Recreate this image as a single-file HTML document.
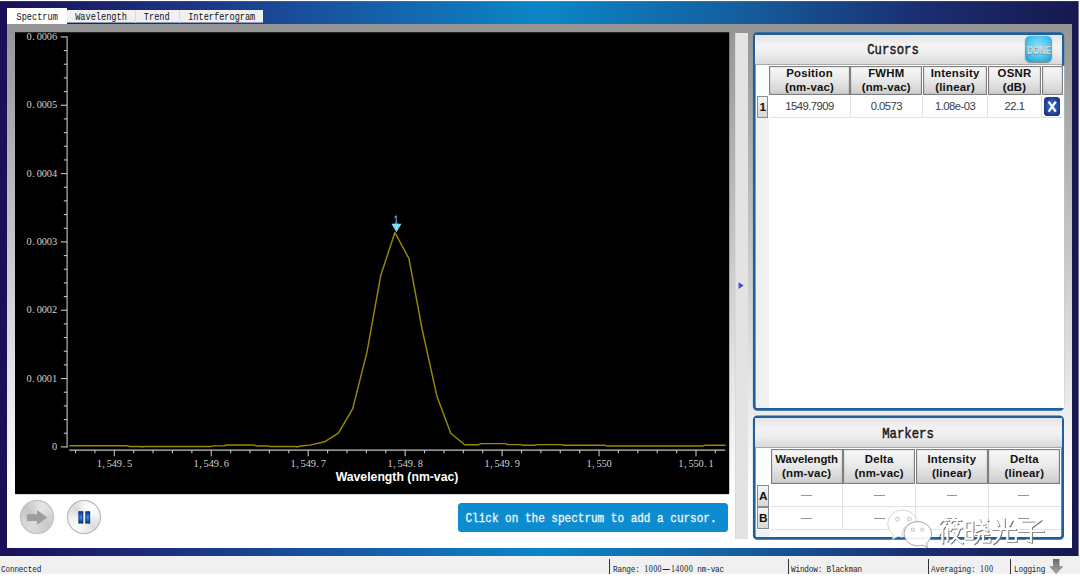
<!DOCTYPE html>
<html><head><meta charset="utf-8"><title>Spectrum</title>
<style>
html,body{margin:0;padding:0;background:#fff;}
body{width:1080px;height:579px;position:relative;overflow:hidden;font-family:"Liberation Sans",sans-serif;}
.abs{position:absolute;}
div{position:absolute;box-sizing:border-box;}
.mono{font-family:"Liberation Mono",monospace;}
.tab{font-family:"Liberation Mono",monospace;font-size:11px;letter-spacing:0;transform:scaleX(0.782);transform-origin:50% 50%;color:#111;text-align:center;white-space:nowrap;}
.c{display:inline-block;text-align:center;letter-spacing:0;line-height:0;vertical-align:baseline;}
.d{font-family:"Liberation Serif",serif;}
.tk{font-family:"Liberation Mono",monospace;font-size:10px;letter-spacing:0;color:#cfcfcf;white-space:nowrap;line-height:12px;height:12px;}
.sb{font-family:"Liberation Mono",monospace;font-size:9.6px;letter-spacing:0;transform:scaleX(0.8);transform-origin:0 50%;color:#222;white-space:nowrap;line-height:12px;top:564.4px;}
.sep{width:1.3px;background:#333;top:558.5px;height:15.5px;}
.hc{border:1px solid #7f7f7f;box-shadow:inset 0 0 1.3px rgba(0,0,0,0.38);background:linear-gradient(#f7f7f7,#eaeaea 45%,#cecece);letter-spacing:0.22px;font-weight:bold;font-size:11.4px;line-height:13.6px;color:#111;text-align:center;padding-top:0px;white-space:nowrap;}
.rh{border:1px solid #8a8a8a;background:linear-gradient(#f6f6f6,#d8d8d8);font-weight:bold;font-size:11.8px;color:#111;text-align:center;}
.cell{font-size:11.3px;letter-spacing:-0.56px;color:#3c3c3c;text-align:center;white-space:nowrap;}
.gl{background:#e2e2e2;}
.dash{height:1.4px;width:10.8px;background:#969696;}
.ptitle{font-family:"Liberation Mono",monospace;font-weight:normal;-webkit-text-stroke:0.5px #1a1a1a;font-size:14.4px;letter-spacing:0;transform:scaleX(0.855);transform-origin:50% 50%;color:#1a1a1a;text-align:center;white-space:nowrap;}
</style></head><body>
<!-- outer frame -->
<svg class="abs" style="left:0;top:0" width="1080" height="579" viewBox="0 0 1080 579"><defs><linearGradient id="fr" x1="0" y1="0" x2="1" y2="0"><stop offset="0%" stop-color="#1a0f58"/><stop offset="15%" stop-color="#1c2f7c"/><stop offset="32%" stop-color="#1858a4"/><stop offset="50%" stop-color="#0b86c8"/><stop offset="68%" stop-color="#14609f"/><stop offset="85%" stop-color="#1a2f72"/><stop offset="100%" stop-color="#17184f"/></linearGradient></defs><rect x="0" y="1.1" width="1078.6" height="554.9" fill="url(#fr)"/></svg>
<!-- interior -->
<div style="left:7px;top:24px;width:1065px;height:524px;background:linear-gradient(to bottom,#949494 0px,#ffffff 471px,#ffffff 524px);"></div>
<!-- tabs -->
<div style="left:67.4px;top:9.6px;width:195.6px;height:13.6px;background:#f0f0f0;border-bottom:1px solid #8a9cc4;"></div>
<div style="left:135px;top:9.6px;width:1px;height:13.4px;background:#d9d9d9;"></div>
<div style="left:178.5px;top:9.6px;width:1px;height:13.4px;background:#d9d9d9;"></div>
<div style="left:7px;top:8px;width:60.4px;height:16px;background:#fff;"></div>
<div class="tab" style="left:7px;width:60.4px;top:11.1px;line-height:12px;">Spectrum</div>
<div class="tab" style="left:67.4px;width:68px;top:11.2px;line-height:12px;">Wavelength</div>
<div class="tab" style="left:135.3px;width:43.5px;top:11.2px;line-height:12px;">Trend</div>
<div class="tab" style="left:178.8px;width:84.2px;top:11.2px;line-height:12px;">Interferogram</div>
<!-- plot -->
<svg class="abs" style="left:0;top:0" width="1080" height="579" viewBox="0 0 1080 579"><rect x="15" y="32.25" width="714.2" height="461.9" fill="#000"/></svg>
<svg class="abs" style="left:0;top:0" width="1080" height="579" viewBox="0 0 1080 579"><g stroke="#c4c4c4" stroke-width="1.1" fill="none" shape-rendering="auto"><path d="M67.1 36.4V447.4"/><path d="M60.8 446.90H67.1"/><path d="M63.8 433.23H67.1"/><path d="M63.8 419.57H67.1"/><path d="M63.8 405.90H67.1"/><path d="M63.8 392.24H67.1"/><path d="M60.8 378.57H67.1"/><path d="M63.8 364.90H67.1"/><path d="M63.8 351.24H67.1"/><path d="M63.8 337.57H67.1"/><path d="M63.8 323.91H67.1"/><path d="M60.8 310.24H67.1"/><path d="M63.8 296.57H67.1"/><path d="M63.8 282.91H67.1"/><path d="M63.8 269.24H67.1"/><path d="M63.8 255.58H67.1"/><path d="M60.8 241.91H67.1"/><path d="M63.8 228.24H67.1"/><path d="M63.8 214.58H67.1"/><path d="M63.8 200.91H67.1"/><path d="M63.8 187.25H67.1"/><path d="M60.8 173.58H67.1"/><path d="M63.8 159.91H67.1"/><path d="M63.8 146.25H67.1"/><path d="M63.8 132.58H67.1"/><path d="M63.8 118.92H67.1"/><path d="M60.8 105.25H67.1"/><path d="M63.8 91.58H67.1"/><path d="M63.8 77.92H67.1"/><path d="M63.8 64.25H67.1"/><path d="M63.8 50.59H67.1"/><path d="M60.8 36.92H67.1"/><path d="M69.3 450.1H725.2"/><path d="M75.52 449.9V453.2"/><path d="M94.91 449.9V453.2"/><path d="M114.30 449.9V456.2"/><path d="M133.69 449.9V453.2"/><path d="M153.08 449.9V453.2"/><path d="M172.47 449.9V453.2"/><path d="M191.86 449.9V453.2"/><path d="M211.25 449.9V456.2"/><path d="M230.64 449.9V453.2"/><path d="M250.03 449.9V453.2"/><path d="M269.42 449.9V453.2"/><path d="M288.81 449.9V453.2"/><path d="M308.20 449.9V456.2"/><path d="M327.59 449.9V453.2"/><path d="M346.98 449.9V453.2"/><path d="M366.37 449.9V453.2"/><path d="M385.76 449.9V453.2"/><path d="M405.15 449.9V456.2"/><path d="M424.54 449.9V453.2"/><path d="M443.93 449.9V453.2"/><path d="M463.32 449.9V453.2"/><path d="M482.71 449.9V453.2"/><path d="M502.10 449.9V456.2"/><path d="M521.49 449.9V453.2"/><path d="M540.88 449.9V453.2"/><path d="M560.27 449.9V453.2"/><path d="M579.66 449.9V453.2"/><path d="M599.05 449.9V456.2"/><path d="M618.44 449.9V453.2"/><path d="M637.83 449.9V453.2"/><path d="M657.22 449.9V453.2"/><path d="M676.61 449.9V453.2"/><path d="M696.00 449.9V456.2"/><path d="M715.39 449.9V453.2"/></g><path d="M69.3 445.7 L127.0 445.7 L129.5 446.5 L141.0 446.5 L142.3 447.0 L143.6 446.5 L210.5 446.5 L214.0 445.9 L224.0 445.8 L227.0 445.0 L253.0 445.0 L257.0 445.9 L267.0 445.9 L270.0 446.5 L296.0 446.5 L297.5 447.0 L299.0 446.3 L303.0 445.8 L310.0 445.1 L324.7 441.8 L338.6 432.8 L352.7 408.6 L366.9 352.4 L380.8 275.2 L394.9 232.6 L408.9 258.4 L422.3 330.0 L436.9 396.2 L450.8 433.3 L464.6 444.7 L478.5 444.7 L481.0 443.6 L505.7 443.6 L508.3 444.6 L520.0 444.6 L522.6 445.3 L534.0 445.3 L537.0 444.6 L561.5 444.6 L564.0 445.3 L604.0 445.3 L607.0 445.9 L702.8 445.9 L705.0 445.2 L725.7 445.2" fill="none" stroke="#968a00" stroke-width="1.45" stroke-linejoin="round"/><path d="M391.4 223.7H401.5L396.4 232.2Z" fill="#7fdcfb"/><path d="M394.4 217.6L396.2 216.2V223.2M394.6 223.3H397.8" fill="none" stroke="#62b4d0" stroke-width="1.1"/></svg>
<div class="tk" style="left:0;width:57.0px;top:442.0px;text-align:right"><span class="c d" style="width:5.08px;font-size:10.4px">0</span></div><div class="tk" style="left:0;width:57.0px;top:373.7px;text-align:right"><span class="c d" style="width:5.08px;font-size:10.4px">0</span><span class="c d" style="width:5.08px;font-size:10.4px;text-align:left;text-indent:0.61px">.</span><span class="c d" style="width:5.08px;font-size:10.4px">0</span><span class="c d" style="width:5.08px;font-size:10.4px">0</span><span class="c d" style="width:5.08px;font-size:10.4px">0</span><span class="c d" style="width:5.08px;font-size:10.4px">1</span></div><div class="tk" style="left:0;width:57.0px;top:305.3px;text-align:right"><span class="c d" style="width:5.08px;font-size:10.4px">0</span><span class="c d" style="width:5.08px;font-size:10.4px;text-align:left;text-indent:0.61px">.</span><span class="c d" style="width:5.08px;font-size:10.4px">0</span><span class="c d" style="width:5.08px;font-size:10.4px">0</span><span class="c d" style="width:5.08px;font-size:10.4px">0</span><span class="c d" style="width:5.08px;font-size:10.4px">2</span></div><div class="tk" style="left:0;width:57.0px;top:237.0px;text-align:right"><span class="c d" style="width:5.08px;font-size:10.4px">0</span><span class="c d" style="width:5.08px;font-size:10.4px;text-align:left;text-indent:0.61px">.</span><span class="c d" style="width:5.08px;font-size:10.4px">0</span><span class="c d" style="width:5.08px;font-size:10.4px">0</span><span class="c d" style="width:5.08px;font-size:10.4px">0</span><span class="c d" style="width:5.08px;font-size:10.4px">3</span></div><div class="tk" style="left:0;width:57.0px;top:168.7px;text-align:right"><span class="c d" style="width:5.08px;font-size:10.4px">0</span><span class="c d" style="width:5.08px;font-size:10.4px;text-align:left;text-indent:0.61px">.</span><span class="c d" style="width:5.08px;font-size:10.4px">0</span><span class="c d" style="width:5.08px;font-size:10.4px">0</span><span class="c d" style="width:5.08px;font-size:10.4px">0</span><span class="c d" style="width:5.08px;font-size:10.4px">4</span></div><div class="tk" style="left:0;width:57.0px;top:100.3px;text-align:right"><span class="c d" style="width:5.08px;font-size:10.4px">0</span><span class="c d" style="width:5.08px;font-size:10.4px;text-align:left;text-indent:0.61px">.</span><span class="c d" style="width:5.08px;font-size:10.4px">0</span><span class="c d" style="width:5.08px;font-size:10.4px">0</span><span class="c d" style="width:5.08px;font-size:10.4px">0</span><span class="c d" style="width:5.08px;font-size:10.4px">5</span></div><div class="tk" style="left:0;width:57.0px;top:32.0px;text-align:right"><span class="c d" style="width:5.08px;font-size:10.4px">0</span><span class="c d" style="width:5.08px;font-size:10.4px;text-align:left;text-indent:0.61px">.</span><span class="c d" style="width:5.08px;font-size:10.4px">0</span><span class="c d" style="width:5.08px;font-size:10.4px">0</span><span class="c d" style="width:5.08px;font-size:10.4px">0</span><span class="c d" style="width:5.08px;font-size:10.4px">6</span></div><div class="tk" style="left:84.3px;width:60px;top:458.9px;text-align:center"><span class="c d" style="width:5.05px;font-size:10.4px">1</span><span class="c d" style="width:5.05px;font-size:10.4px;text-align:left;text-indent:0.61px">,</span><span class="c d" style="width:5.05px;font-size:10.4px">5</span><span class="c d" style="width:5.05px;font-size:10.4px">4</span><span class="c d" style="width:5.05px;font-size:10.4px">9</span><span class="c d" style="width:5.05px;font-size:10.4px;text-align:left;text-indent:0.61px">.</span><span class="c d" style="width:5.05px;font-size:10.4px">5</span></div><div class="tk" style="left:181.2px;width:60px;top:458.9px;text-align:center"><span class="c d" style="width:5.05px;font-size:10.4px">1</span><span class="c d" style="width:5.05px;font-size:10.4px;text-align:left;text-indent:0.61px">,</span><span class="c d" style="width:5.05px;font-size:10.4px">5</span><span class="c d" style="width:5.05px;font-size:10.4px">4</span><span class="c d" style="width:5.05px;font-size:10.4px">9</span><span class="c d" style="width:5.05px;font-size:10.4px;text-align:left;text-indent:0.61px">.</span><span class="c d" style="width:5.05px;font-size:10.4px">6</span></div><div class="tk" style="left:278.2px;width:60px;top:458.9px;text-align:center"><span class="c d" style="width:5.05px;font-size:10.4px">1</span><span class="c d" style="width:5.05px;font-size:10.4px;text-align:left;text-indent:0.61px">,</span><span class="c d" style="width:5.05px;font-size:10.4px">5</span><span class="c d" style="width:5.05px;font-size:10.4px">4</span><span class="c d" style="width:5.05px;font-size:10.4px">9</span><span class="c d" style="width:5.05px;font-size:10.4px;text-align:left;text-indent:0.61px">.</span><span class="c d" style="width:5.05px;font-size:10.4px">7</span></div><div class="tk" style="left:375.2px;width:60px;top:458.9px;text-align:center"><span class="c d" style="width:5.05px;font-size:10.4px">1</span><span class="c d" style="width:5.05px;font-size:10.4px;text-align:left;text-indent:0.61px">,</span><span class="c d" style="width:5.05px;font-size:10.4px">5</span><span class="c d" style="width:5.05px;font-size:10.4px">4</span><span class="c d" style="width:5.05px;font-size:10.4px">9</span><span class="c d" style="width:5.05px;font-size:10.4px;text-align:left;text-indent:0.61px">.</span><span class="c d" style="width:5.05px;font-size:10.4px">8</span></div><div class="tk" style="left:472.1px;width:60px;top:458.9px;text-align:center"><span class="c d" style="width:5.05px;font-size:10.4px">1</span><span class="c d" style="width:5.05px;font-size:10.4px;text-align:left;text-indent:0.61px">,</span><span class="c d" style="width:5.05px;font-size:10.4px">5</span><span class="c d" style="width:5.05px;font-size:10.4px">4</span><span class="c d" style="width:5.05px;font-size:10.4px">9</span><span class="c d" style="width:5.05px;font-size:10.4px;text-align:left;text-indent:0.61px">.</span><span class="c d" style="width:5.05px;font-size:10.4px">9</span></div><div class="tk" style="left:569.0px;width:60px;top:458.9px;text-align:center"><span class="c d" style="width:5.05px;font-size:10.4px">1</span><span class="c d" style="width:5.05px;font-size:10.4px;text-align:left;text-indent:0.61px">,</span><span class="c d" style="width:5.05px;font-size:10.4px">5</span><span class="c d" style="width:5.05px;font-size:10.4px">5</span><span class="c d" style="width:5.05px;font-size:10.4px">0</span></div><div class="tk" style="left:666.0px;width:60px;top:458.9px;text-align:center"><span class="c d" style="width:5.05px;font-size:10.4px">1</span><span class="c d" style="width:5.05px;font-size:10.4px;text-align:left;text-indent:0.61px">,</span><span class="c d" style="width:5.05px;font-size:10.4px">5</span><span class="c d" style="width:5.05px;font-size:10.4px">5</span><span class="c d" style="width:5.05px;font-size:10.4px">0</span><span class="c d" style="width:5.05px;font-size:10.4px;text-align:left;text-indent:0.61px">.</span><span class="c d" style="width:5.05px;font-size:10.4px">1</span></div>
<div style="left:297px;width:200px;top:469.9px;text-align:center;color:#fff;font-weight:bold;font-size:12.25px;line-height:14px;white-space:nowrap;">Wavelength (nm-vac)</div>
<!-- buttons -->
<div style="left:20.1px;top:500.1px;width:34px;height:34.2px;border-radius:50%;background:conic-gradient(from 0deg,#dedede 0deg,#e6e6e6 35deg,#d6d6d6 80deg,#c9c9c9 130deg,#d4d4d4 170deg,#dcdcdc 215deg,#d2d2d2 260deg,#c6c6c6 310deg,#dedede 360deg);border:0.9px solid #bdbdbd;box-shadow:0 0 1.2px #d0d0d0;"></div>
<svg class="abs" style="left:15px;top:495px" width="120" height="46" viewBox="15 495 120 46">
<defs><linearGradient id="gp" x1="0" y1="0" x2="0" y2="1"><stop offset="0" stop-color="#1b1e66"/><stop offset="0.22" stop-color="#1c58b8"/><stop offset="0.5" stop-color="#1f93e4"/><stop offset="0.78" stop-color="#1c58b8"/><stop offset="1" stop-color="#1b1e66"/></linearGradient></defs>
<path d="M26.9 514.2H37V510.1L47.2 517.4L37 524.7V520.9H26.9Z" fill="#9d9d9d"/>
</svg>
<div style="left:66.9px;top:500.2px;width:34px;height:34.2px;border-radius:50%;background:conic-gradient(from 0deg,#f6f6f6 0deg,#ffffff 40deg,#f2f2f2 85deg,#dcdcdc 135deg,#efefef 175deg,#fbfbfb 220deg,#f0f0f0 265deg,#d9d9d9 315deg,#f6f6f6 360deg);border:0.9px solid #b4b4b4;box-shadow:0 0 1.2px #d8d8d8;"></div>
<svg class="abs" style="left:60px;top:495px" width="50" height="46" viewBox="60 495 50 46">
<rect x="78.5" y="511.3" width="4.7" height="12.2" rx="0.6" fill="url(#gp)"/>
<rect x="85.4" y="511.3" width="4.7" height="12.2" rx="0.6" fill="url(#gp)"/>
<rect x="78.5" y="511.3" width="0.9" height="12.2" fill="#1a1f66" opacity="0.7"/><rect x="82.3" y="511.3" width="0.9" height="12.2" fill="#1a1f66" opacity="0.7"/>
<rect x="85.4" y="511.3" width="0.9" height="12.2" fill="#1a1f66" opacity="0.7"/><rect x="89.2" y="511.3" width="0.9" height="12.2" fill="#1a1f66" opacity="0.7"/>
</svg>
<!-- message -->
<div style="left:458.2px;top:503.3px;width:269.5px;height:28.4px;background:#0d8ccf;border-radius:3.5px;"></div>
<div class="mono" style="left:431.4px;width:320px;top:511.9px;text-align:center;color:#eef4fa;font-size:13px;line-height:14px;letter-spacing:0;white-space:nowrap;transform:scaleX(0.847);transform-origin:50% 50%;-webkit-text-stroke:0.35px #eef4fa;">Click on the spectrum to add a cursor.</div>
<!-- splitter -->
<div style="left:735px;top:33px;width:12.6px;height:506px;background:#e3e3e3;border-left:1px solid #d9d9d9;"></div>
<svg class="abs" style="left:737px;top:279.9px" width="10" height="12" viewBox="0 0 10 12"><path d="M1.6 2.2L6.6 5.6L1.6 9Z" fill="#3b48d8"/></svg>

<!-- Cursors panel -->
<svg class="abs" style="left:740px;top:20px" width="340" height="540" viewBox="740 20 340 540"><rect x="754.25" y="33.65" width="308.6" height="375.7" rx="3" fill="#fff" stroke="#1f5f9c" stroke-width="2.7"/><rect x="1061" y="65.8" width="3.3" height="342.2" fill="#fff"/><rect x="754.25" y="416.95" width="308.4" height="121.5" rx="3" fill="#fff" stroke="#1f5f9c" stroke-width="2.7"/></svg>
<div style="left:755.2px;top:34.6px;width:307px;height:30.4px;background:linear-gradient(#e4e4e4 0%,#f3f3f3 35%,#efefef 60%,#d9d9d9 100%);border-bottom:1.2px solid #a8a8a8;"></div>

<div class="ptitle" style="left:842.8px;width:100px;top:42.1px;line-height:16px;">Cursors</div>
<!-- DONE -->
<div style="left:1024.7px;top:35.8px;width:27.8px;height:26.2px;border-radius:5.5px;background:radial-gradient(ellipse 75% 75% at 50% 42%,#93e0f7 0%,#55c8ee 50%,#1fa8df 85%,#1a95cf 100%);box-shadow:0 0.7px 1.2px rgba(0,0,0,0.4);"></div>
<div style="left:1018.6px;width:40px;top:43.5px;line-height:12px;text-align:center;font-weight:bold;font-size:10.6px;color:#d6e0e6;transform:scaleX(0.79);text-shadow:0.5px 0.6px 0.4px #6b8c9a;">DONE</div>
<!-- header cells -->
<div class="hc" style="left:769.3px;top:66px;width:80.4px;height:28.9px;">Position<br>(nm-vac)</div>
<div class="hc" style="left:850.2px;top:66px;width:72.2px;height:28.9px;">FWHM<br>(nm-vac)</div>
<div class="hc" style="left:922.9px;top:66px;width:64.4px;height:28.9px;">Intensity<br>(linear)</div>
<div class="hc" style="left:987.8px;top:66px;width:53.4px;height:28.9px;">OSNR<br>(dB)</div>
<div class="hc" style="left:1041.7px;top:66px;width:21.4px;height:28.9px;"></div>
<!-- row -->
<div class="rh" style="left:757.2px;top:95.8px;width:11.2px;height:21.8px;line-height:20px;">1</div>
<div class="gl" style="left:769px;top:117.2px;width:294px;height:1px;"></div>
<div class="gl" style="left:849.6px;top:94.6px;width:1px;height:23px;"></div>
<div class="gl" style="left:922.3px;top:94.6px;width:1px;height:23px;"></div>
<div class="gl" style="left:987.2px;top:94.6px;width:1px;height:23px;"></div>
<div class="gl" style="left:1041.1px;top:94.6px;width:1px;height:23px;"></div>
<div style="left:755.6px;top:117.8px;width:13.2px;height:290.2px;background:#f0f0f0;"></div>
<div class="cell" style="left:769.3px;width:80.4px;top:99.6px;line-height:13px;">1549.7909</div>
<div class="cell" style="left:850.2px;width:72.2px;top:99.6px;line-height:13px;">0.0573</div>
<div class="cell" style="left:922.9px;width:64.4px;top:99.6px;line-height:13px;">1.08e-03</div>
<div class="cell" style="left:987.8px;width:53.4px;top:99.6px;line-height:13px;">22.1</div>
<!-- X button -->
<div style="left:1043.6px;top:97.2px;width:16.4px;height:18.8px;border-radius:3.5px;background:radial-gradient(ellipse 70% 70% at 50% 48%,#2f6ed0 0%,#2554b0 45%,#1b2c74 85%,#181f5c 100%);"></div>
<svg class="abs" style="left:1043.6px;top:97.2px" width="16.4" height="18.8" viewBox="0 0 16.4 18.8"><path d="M4.6 4.6L11.8 14.6M11.8 4.6L4.6 14.6" stroke="#fff" stroke-width="2.3" fill="none"/></svg>

<!-- Markers panel -->

<div style="left:755.4px;top:418px;width:306.4px;height:29.6px;background:linear-gradient(#e4e4e4 0%,#f3f3f3 35%,#efefef 60%,#d9d9d9 100%);border-bottom:1.2px solid #a8a8a8;"></div>
<div class="ptitle" style="left:858px;width:100px;top:425.6px;line-height:16px;">Markers</div>
<div class="hc" style="left:770.6px;top:448.6px;width:72px;height:35px;padding-top:3.7px;"><span style="letter-spacing:-0.08px">Wavelength</span><br>(nm-vac)</div>
<div class="hc" style="left:843.1px;top:448.6px;width:72.2px;height:35px;padding-top:3.7px;">Delta<br>(nm-vac)</div>
<div class="hc" style="left:915.8px;top:448.6px;width:72px;height:35px;padding-top:3.7px;">Intensity<br>(linear)</div>
<div class="hc" style="left:988.3px;top:448.6px;width:72.2px;height:35px;padding-top:3.7px;">Delta<br>(linear)</div>
<div class="rh" style="left:757.2px;top:484.8px;width:12.2px;height:22.2px;line-height:21px;">A</div>
<div class="rh" style="left:757.2px;top:507.4px;width:12.2px;height:21.8px;line-height:21px;">B</div>
<div class="gl" style="left:770px;top:506.2px;width:291px;height:1px;"></div>
<div class="gl" style="left:770px;top:528.8px;width:291px;height:1px;"></div>
<div class="gl" style="left:842.3px;top:484px;width:1px;height:45px;"></div>
<div class="gl" style="left:915.0px;top:484px;width:1px;height:45px;"></div>
<div class="gl" style="left:987.5px;top:484px;width:1px;height:45px;"></div>
<div style="left:755.6px;top:529.6px;width:14px;height:7.5px;background:#f0f0f0;"></div>
<div class="dash" style="left:801.4px;top:494.9px;"></div>
<div class="dash" style="left:874px;top:494.9px;"></div>
<div class="dash" style="left:946.6px;top:494.9px;"></div>
<div class="dash" style="left:1018.2px;top:494.9px;"></div>
<div class="dash" style="left:801.4px;top:517.6px;"></div>
<div class="dash" style="left:874px;top:517.6px;"></div>
<div class="dash" style="left:946.6px;top:517.6px;"></div>
<div class="dash" style="left:1018.2px;top:517.6px;"></div>

<!-- watermark -->
<svg class="abs" style="left:880px;top:505px" width="175" height="46" viewBox="880 505 175 46">
<g fill="#fff" fill-opacity="0.93">
<path d="M902.6 510.1c-8.2 0-14.8 6.1-14.8 13.7c0 4.3 2.2 8.1 5.600000000000001 10.6l-1.2 5.2l5.8-3.1c1.5 0.5 3 0.8 4.6 0.9c-0.3-1-0.4-2-0.4-3c0-6.700000000000001 6.1-12.1 13.7-12.1c0.5 0 1 0 1.4 0.1c-1.2-7-7.3-12.3-14.7-12.3z" stroke="#b9b9b9" stroke-width="0.6"/>
<path d="M931.5 533.7c0-6.7-6.1-12.1-13.7-12.1s-13.7 5.4-13.7 12.1s6.1 12.1 13.7 12.1c1.7 0 3.3-0.3 4.8-0.7l4.9 2.5l-1.2-4.300000000000001c3.2-2.2 5.2-5.700000000000001 5.2-9.6z" stroke="#7d7d7d" stroke-width="0.7"/>
</g>
<g fill="#fff" stroke="#9a9a9a" stroke-width="0.6">
<circle cx="897.5" cy="519.2" r="1.9"/><circle cx="909.4" cy="519.2" r="1.9"/>
<circle cx="912.9" cy="529.6" r="1.6"/><circle cx="922.3" cy="529.6" r="1.6"/>
</g>
<g transform="translate(0.9 0.9)" fill="none" stroke="#6e6e6e" stroke-width="2.1">
<!-- xiao1 -->
<g transform="translate(937.4 517.6)">
<path d="M7 0L2 6M6 2.5H12M8 4L9 6.5M17 0L13 5M16 2.5H24M19 4L20.5 6.5M7 8L1 18M5 12V26M10 10V24M16.500 7L12 13.500M14.500 10H25M22 10C20 17 17 22 12.500 25.500M15 14C17 19 21 23 25.500 25.500"/>
</g>
<!-- xiao2 -->
<g transform="translate(964.0 517.6)">
<path d="M1.5 4H8.5V21H1.5ZM1.500 12.500H8.5M11 6.500H21.500M15 1C16 7 19 11 24.500 13.500M22 8.500C19 11 15 13 11 14M22 1L24 3.500M10 16.500H25.500M15 16.500C15 21 13 24 9.500 26M19 16.500V24H25.500V21"/>
</g>
<!-- guang -->
<g transform="translate(990.8 517.6)">
<path d="M13 0V11M5 2L8 8.500M21.500 2L18 8.500M1 11.500H25.500M10 11.500C10 19 7 23 1.500 26M16.500 11.500V23.500H25V19.500"/>
</g>
<!-- zi -->
<g transform="translate(1017.4 517.6)">
<path d="M4 3H22L13.500 9.500V24L9 22.500M0 13.500H26.500"/>
</g>
</g>
<g fill="none" stroke="#ffffff" stroke-width="2.1">
<!-- xiao1 -->
<g transform="translate(937.4 517.6)">
<path d="M7 0L2 6M6 2.5H12M8 4L9 6.5M17 0L13 5M16 2.5H24M19 4L20.5 6.5M7 8L1 18M5 12V26M10 10V24M16.500 7L12 13.500M14.500 10H25M22 10C20 17 17 22 12.500 25.500M15 14C17 19 21 23 25.500 25.500"/>
</g>
<!-- xiao2 -->
<g transform="translate(964.0 517.6)">
<path d="M1.5 4H8.5V21H1.5ZM1.500 12.500H8.5M11 6.500H21.500M15 1C16 7 19 11 24.500 13.500M22 8.500C19 11 15 13 11 14M22 1L24 3.500M10 16.500H25.500M15 16.500C15 21 13 24 9.500 26M19 16.500V24H25.500V21"/>
</g>
<!-- guang -->
<g transform="translate(990.8 517.6)">
<path d="M13 0V11M5 2L8 8.500M21.500 2L18 8.500M1 11.500H25.500M10 11.500C10 19 7 23 1.500 26M16.500 11.500V23.500H25V19.500"/>
</g>
<!-- zi -->
<g transform="translate(1017.4 517.6)">
<path d="M4 3H22L13.500 9.500V24L9 22.500M0 13.500H26.500"/>
</g>
</g>
</svg>
<!-- status bar -->
<div style="left:0;top:556px;width:1080px;height:17.8px;background:#f0f0f0;"></div>
<div class="sb" style="left:1.0px;"><span class="c" style="width:5.58px">C</span><span class="c" style="width:5.58px">o</span><span class="c" style="width:5.58px">n</span><span class="c" style="width:5.58px">n</span><span class="c" style="width:5.58px">e</span><span class="c" style="width:5.58px">c</span><span class="c" style="width:5.58px">t</span><span class="c" style="width:5.58px">e</span><span class="c" style="width:5.58px">d</span></div>
<div class="sep" style="left:609.2px;"></div>
<div class="sb" style="left:613.0px;"><span class="c" style="width:5.55px">R</span><span class="c" style="width:5.55px">a</span><span class="c" style="width:5.55px">n</span><span class="c" style="width:5.55px">g</span><span class="c" style="width:5.55px">e</span><span class="c" style="width:5.55px">:</span><span class="c" style="width:5.55px">&nbsp;</span><span class="c d" style="width:5.55px;font-size:10.0px">1</span><span class="c d" style="width:5.55px;font-size:10.0px">0</span><span class="c d" style="width:5.55px;font-size:10.0px">0</span><span class="c d" style="width:5.55px;font-size:10.0px">0</span><span class="c" style="width:11.1px"><span style="display:inline-block;width:8.32px;height:1px;background:currentColor;vertical-align:middle;margin-bottom:1px"></span></span><span class="c d" style="width:5.55px;font-size:10.0px">1</span><span class="c d" style="width:5.55px;font-size:10.0px">4</span><span class="c d" style="width:5.55px;font-size:10.0px">0</span><span class="c d" style="width:5.55px;font-size:10.0px">0</span><span class="c d" style="width:5.55px;font-size:10.0px">0</span><span class="c" style="width:5.55px">&nbsp;</span><span class="c" style="width:5.55px">n</span><span class="c" style="width:5.55px">m</span><span class="c" style="width:5.55px">-</span><span class="c" style="width:5.55px">v</span><span class="c" style="width:5.55px">a</span><span class="c" style="width:5.55px">c</span></div>
<div class="sep" style="left:787.8px;"></div>
<div class="sb" style="left:791.2px;"><span class="c" style="width:5.55px">W</span><span class="c" style="width:5.55px">i</span><span class="c" style="width:5.55px">n</span><span class="c" style="width:5.55px">d</span><span class="c" style="width:5.55px">o</span><span class="c" style="width:5.55px">w</span><span class="c" style="width:5.55px">:</span><span class="c" style="width:5.55px">&nbsp;</span><span class="c" style="width:5.55px">B</span><span class="c" style="width:5.55px">l</span><span class="c" style="width:5.55px">a</span><span class="c" style="width:5.55px">c</span><span class="c" style="width:5.55px">k</span><span class="c" style="width:5.55px">m</span><span class="c" style="width:5.55px">a</span><span class="c" style="width:5.55px">n</span></div>
<div class="sep" style="left:927.8px;"></div>
<div class="sb" style="left:931.2px;"><span class="c" style="width:5.55px">A</span><span class="c" style="width:5.55px">v</span><span class="c" style="width:5.55px">e</span><span class="c" style="width:5.55px">r</span><span class="c" style="width:5.55px">a</span><span class="c" style="width:5.55px">g</span><span class="c" style="width:5.55px">i</span><span class="c" style="width:5.55px">n</span><span class="c" style="width:5.55px">g</span><span class="c" style="width:5.55px">:</span><span class="c" style="width:5.55px">&nbsp;</span><span class="c d" style="width:5.55px;font-size:10.0px">1</span><span class="c d" style="width:5.55px;font-size:10.0px">0</span><span class="c d" style="width:5.55px;font-size:10.0px">0</span></div>
<div class="sep" style="left:1009.6px;"></div>
<div class="sb" style="left:1014.2px;"><span class="c" style="width:5.58px">L</span><span class="c" style="width:5.58px">o</span><span class="c" style="width:5.58px">g</span><span class="c" style="width:5.58px">g</span><span class="c" style="width:5.58px">i</span><span class="c" style="width:5.58px">n</span><span class="c" style="width:5.58px">g</span></div>
<svg class="abs" style="left:1047px;top:556.6px" width="20" height="20" viewBox="0 0 18 18" preserveAspectRatio="none"><defs><linearGradient id="ga" x1="0" y1="0" x2="0" y2="1"><stop offset="0" stop-color="#6a6a6a"/><stop offset="1" stop-color="#a8a8a8"/></linearGradient></defs><path d="M5.4 1.8H11.2V8.4H14.6L8.3 15.6L2 8.4H5.4Z" fill="url(#ga)"/></svg>
</body></html>
